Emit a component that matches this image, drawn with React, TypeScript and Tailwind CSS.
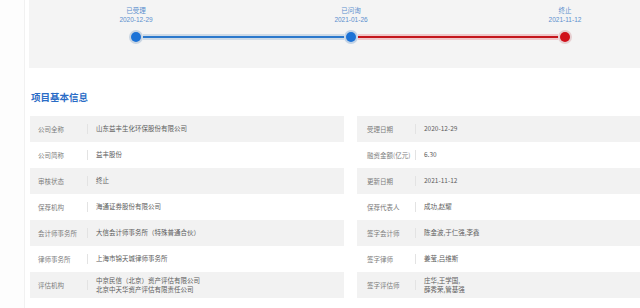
import React from "react";

const leftRows: { label: string; value: string[] }[] = [
  { label: "公司全称", value: ["山东益丰生化环保股份有限公司"] },
  { label: "公司简称", value: ["益丰股份"] },
  { label: "审核状态", value: ["终止"] },
  { label: "保荐机构", value: ["海通证券股份有限公司"] },
  { label: "会计师事务所", value: ["大信会计师事务所（特殊普通合伙）"] },
  { label: "律师事务所", value: ["上海市锦天城律师事务所"] },
  { label: "评估机构", value: ["中京民信（北京）资产评估有限公司", "北京中天华资产评估有限责任公司"] },
];

const rightRows: { label: string; value: string[] }[] = [
  { label: "受理日期", value: ["2020-12-29"] },
  { label: "融资金额(亿元)", value: ["6.30"] },
  { label: "更新日期", value: ["2021-11-12"] },
  { label: "保荐代表人", value: ["成功,赵耀"] },
  { label: "签字会计师", value: ["陈金波,于仁强,李鑫"] },
  { label: "签字律师", value: ["姜莹,吕维斯"] },
  { label: "签字评估师", value: ["庄华,王学国,", "薛秀荣,管基强"] },
];

function Row({
  label,
  value,
  gray,
  right,
}: {
  label: string;
  value: string[];
  gray: boolean;
  right?: boolean;
}) {
  return (
    <div
      className={`flex h-[26px] items-center ${gray ? "bg-[#f2f2f2]" : "bg-white"} ${
        right ? "pl-[10px]" : "pl-[8px]"
      }`}
    >
      <div className={`${right ? "w-[48px]" : "w-[49px]"} whitespace-nowrap text-[6.5px] leading-[8px] text-[#7d7d7d]`}>
        {label}
      </div>
      <div className="h-[10px] w-px bg-[#e3e3e3]" />
      <div className="flex flex-col pl-[8px] text-[6.5px] leading-[9.5px] text-[#5c5c5c] whitespace-nowrap">
        {value.map((v) => (
          <span key={v}>{v}</span>
        ))}
      </div>
    </div>
  );
}

function Dot({ color, halo }: { color: string; halo: string }) {
  return (
    <div className={`flex h-[14px] w-[14px] shrink-0 items-center justify-center rounded-full ${halo}`}>
      <div className={`h-[10px] w-[10px] rounded-full ${color}`} />
    </div>
  );
}

function Line({ width, core, halo }: { width: string; core: string; halo: string }) {
  return (
    <div className={`flex h-[6px] shrink-0 items-center ${width} ${halo}`}>
      <div className={`h-[2px] w-full ${core}`} />
    </div>
  );
}

export default function App() {
  const nodes = [
    { t: "已受理", d: "2020-12-29" },
    { t: "已问询", d: "2021-01-26" },
    { t: "终止", d: "2021-11-12" },
  ];
  return (
    <div
      className="flex h-[308px] w-[640px] overflow-hidden bg-white"
      style={{ fontFamily: '"Noto Sans CJK SC", "Noto Sans", sans-serif' }}
    >
      <div className="h-full w-[25px] shrink-0 border-r border-[#f1f1f1] bg-[#fdfdfd]" />
      <div className="min-w-0 flex-1">
        {/* timeline panel */}
        <div className="ml-[4px] h-[68px] bg-[#f4f4f4] pt-[6px]">
          <div className="flex gap-[155px] pl-[77px]">
            {nodes.map((n, i) => (
              <div
                key={n.d}
                className={`flex w-[60px] flex-col items-center text-[6.5px] text-[#5b8fce] ${
                  i === 2 ? "-ml-px" : ""
                }`}
              >
                <span className="block leading-[9.5px]">{n.t}</span>
                <span className="block font-['Liberation_Sans',sans-serif] leading-[8px]">{n.d}</span>
              </div>
            ))}
          </div>
          <div className="mt-[6.5px] flex items-center pl-[77px]">
            <div className="w-[23px]" />
            <Dot color="bg-[#1c72d6]" halo="bg-[#c9d5e2]" />
            <Line width="w-[201px]" core="bg-[#2b78cc]" halo="bg-[#cfdbe7]" />
            <Dot color="bg-[#1c72d6]" halo="bg-[#c2d3e6]" />
            <Line width="w-[200px]" core="bg-[#c4161c]" halo="bg-[#f0c9cb]" />
            <Dot color="bg-[#d0101a]" halo="bg-[#e6cfd1]" />
          </div>
        </div>

        {/* heading */}
        <div className="mt-[23px] pl-[6px] text-[9.5px] font-bold leading-[12px] text-[#2a6cc6]">
          项目基本信息
        </div>

        {/* tables */}
        <div className="mt-[13px] grid grid-cols-[314px_314px] gap-x-[13px] pl-[5px]">
          <div className="flex flex-col">
            {leftRows.map((r, i) => (
              <Row key={r.label} label={r.label} value={r.value} gray={i % 2 === 0} />
            ))}
          </div>
          <div className="flex flex-col">
            {rightRows.map((r, i) => (
              <Row key={r.label} label={r.label} value={r.value} gray={i % 2 === 0} right />
            ))}
          </div>
        </div>
      </div>
    </div>
  );
}
